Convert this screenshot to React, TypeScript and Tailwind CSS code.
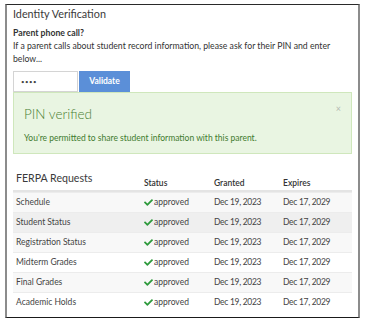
import React from "react";

const rows = [
  "Schedule",
  "Student Status",
  "Registration Status",
  "Midterm Grades",
  "Final Grades",
  "Academic Holds",
];

function Check() {
  return (
    <svg viewBox="0 0 512 512" className="w-[9px] h-[9px] shrink-0" fill="#2e9a3c">
      <path d="M173.898 439.404l-166.4-166.4c-9.997-9.997-9.997-26.206 0-36.204l36.203-36.204c9.997-9.998 26.207-9.998 36.204 0L192 312.69 432.095 72.596c9.997-9.997 26.207-9.997 36.204 0l36.203 36.204c9.997 9.997 9.997 26.206 0 36.204l-294.4 294.401c-9.998 9.997-26.207 9.997-36.204-.001z" />
    </svg>
  );
}

export default function App() {
  return (
    <div className="w-[367px] h-[325px] bg-white pt-[4px] pl-[5px] [font-family:Lato,sans-serif]">
      <div className="box-border w-[355px] h-[314px] border-t border-t-[#2a2a2a] border-b border-b-[#1a1a1a] border-l-2 border-r-2 border-l-[#8c8c8c] border-r-[#8c8c8c] px-[6px] text-[#333]">
        <div className="h-[18px] leading-[18px] text-[10.8px] text-[#3a3a3a]">Identity Verification</div>
        <div className="mt-[3px] text-[8.7px] leading-[13px]">
          <div className="font-bold">Parent phone call?</div>
          <div>If a parent calls about student record information, please ask for their PIN and enter below...</div>
        </div>
        <div className="mt-[6px] flex h-[21px] gap-[1px]">
          <div className="box-border w-[65px] h-[21px] border border-[#d4d4d4] bg-white flex items-center pl-[7px] text-[6px] tracking-[0.5px] text-[#444]">
            ••••
          </div>
          <div className="w-[51px] h-[21px] bg-[#5b8fd8] text-white font-bold text-[8.5px] flex items-center justify-center">
            Validate
          </div>
        </div>
        <div className="relative box-border h-[62px] border border-[#cfe7bc] bg-[#e9f5e2] pl-[10px] text-[#4a8032]">
          <div className="mt-[13px] text-[13.5px] leading-[17px] font-light">PIN verified</div>
          <div className="mt-[9px] text-[8.5px] leading-[12px] text-[#3f7b2f]">
            You're permitted to share student information with this parent.
          </div>
          <div className="absolute right-[10px] top-[11px] text-[9px] leading-[10px] text-[#b4b9b2]">×</div>
        </div>
        <div className="mt-[10px]">
          <div className="grid grid-cols-[128px_70px_69px_71px] h-[28px] items-end border-b-2 border-[#e4e4e4]">
            <div className="pl-[3px] pb-[5px] text-[10.6px] leading-[14px] text-[#3a3a3a]">FERPA Requests</div>
            <div className="pl-[3px] pb-[1px] text-[8.5px] leading-[12px] font-semibold">Status</div>
            <div className="pl-[3px] pb-[1px] text-[8.5px] leading-[12px] font-semibold">Granted</div>
            <div className="pl-[3px] pb-[1px] text-[8.5px] leading-[12px] font-semibold">Expires</div>
          </div>
          {rows.map((r, i) => (
            <div
              key={r}
              className={
                "grid grid-cols-[128px_70px_69px_71px] h-[20px] items-center text-[8.5px] text-[#444] border-t border-[#ececec] first:border-t-0 " +
                (i === 1 ? "bg-[#efefef]" : i % 2 === 0 ? "bg-[#f8f8f8]" : "bg-white")
              }
            >
              <div className="pl-[3px]">{r}</div>
              <div className="pl-[3px] flex items-center gap-[1px]">
                <Check />
                <span>approved</span>
              </div>
              <div className="pl-[3px] tracking-[-0.3px]">Dec 19, 2023</div>
              <div className="pl-[3px] tracking-[-0.3px]">Dec 17, 2029</div>
            </div>
          ))}
        </div>
      </div>
    </div>
  );
}
